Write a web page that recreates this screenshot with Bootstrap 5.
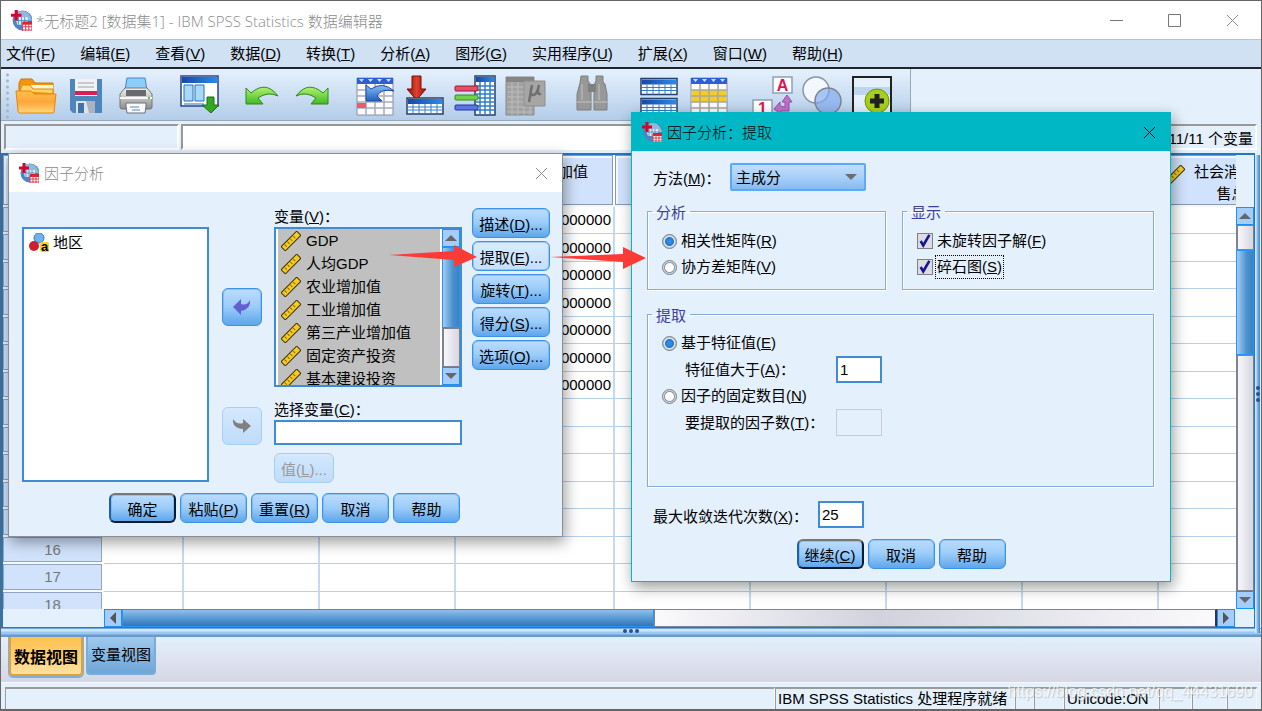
<!DOCTYPE html>
<html lang="zh-CN">
<head>
<meta charset="utf-8">
<meta name="viewport" content="width=device-width, initial-scale=1">
<title>IBM SPSS Statistics 数据编辑器</title>
<link href="https://cdn.jsdelivr.net/npm/bootstrap@5.3.0/dist/css/bootstrap.min.css" rel="stylesheet">
<style>
:root{--pane:#e4f0fc;--head:#d1e3fc;--blue:#2277c8;--line:#b5d0ea;--teal:#00b7c5}
body{font:15px/20px "Liberation Sans","Noto Sans CJK SC",sans-serif;color:#000;background:var(--pane);overflow:hidden}
button,input,select{font:inherit;color:inherit}
.app-window{height:100vh;border:1px solid #666;border-bottom-width:2px;background:var(--pane)}
.caption-text{font-family:"Noto Sans CJK SC",sans-serif;font-weight:300}
.win-title .caption-text{font-family:"Open Sans","Noto Sans CJK SC",sans-serif;padding-top:1px}
.win-title{height:38px;background:#fff;color:#8b8b8b;padding-left:10px}
.win-btn{width:58px;height:38px;border:0;background:none;padding:0}
.menu-strip{height:31px;gap:25px;padding:1px 0 0 5px;background:#cfe1f3;border-top:1px solid #b7c4d3;border-bottom:2px solid #20242c}
.menu-strip a{color:#000;text-decoration:none;white-space:nowrap}
.tool-strip{height:52px;background:linear-gradient(#e6f1fd,#b3cde9);border-bottom:1px solid #9aa7b6;border-right:1px solid #9aa7b6;width:910px;padding:2px 0 0 10px}
.grip-dots{width:3px;height:48px;margin-left:-5px;margin-right:2px;background:radial-gradient(circle,#a9b6c8 1px,#fff0 2px) 0 0/3px 6px}
.tool-group{margin-right:13px}
.tool-group.wide-gap{margin-right:17px}
.tool-btn{width:50px;height:48px;padding:0;border:0;background:none}
.tool-btn svg,.win-btn svg{display:block;margin:auto}
.cell-bar{height:32px;padding:3px 4px 3px 3px;gap:2px}
.cell-name{width:175px;border:2px solid #fff;border-top-color:#989898;border-left-color:#989898;background:var(--pane)}
.cell-edit{border:2px solid #fff;border-top-color:#989898;border-left-color:#989898;background:#fff;min-width:0}
.cell-info{width:105px;border-top:2px solid #989898;border-right:2px solid #fff;border-bottom:2px solid #fff;text-align:right;padding:3px 2px 0 0;white-space:nowrap}
.grid-frame{margin-right:6px;border:2px solid var(--blue);border-right-width:1px;border-bottom-width:1px;min-height:0}
.grid-view{min-width:0;overflow:hidden;background:#fff}
.data-grid{table-layout:fixed;width:1193px;border-collapse:separate;border-spacing:0}
.data-grid td{height:28px;padding:0 2px 0 0;text-align:right;border-right:2px solid #c5daf0;border-bottom:1px solid var(--line)}
.data-grid tbody tr:nth-child(odd)>*{height:27px}
.data-grid th{font-weight:400;background:var(--head);padding:0;border-right:2px solid #fff;border-bottom:2px solid #f4f8ff;box-shadow:inset 0 0 0 1px #94a5c0;text-align:center;color:#777}
.data-grid thead th{height:51px;color:#000;vertical-align:top;padding:6px 25px 0 0;line-height:22px;box-shadow:inset 0 0 0 1px #8999b4,inset 2px 2px 0 1px #f2f7ff}
.data-grid thead th.last-head{padding:6px 0 0 6px}
.c-num{width:101px}.c-first{width:80px}.c-std{width:136px}.c-wide{width:159px}
.v-scroll{width:19px}
.s-arrow{width:18px;height:18px;flex:none;padding:0;border:1px solid #1e90f5;background:#a5cdfc;display:flex;align-items:center;justify-content:center}
.v-thumb{background:linear-gradient(90deg,#a2cdf2,#4c92cf 60%,#3c80c2);border:1px solid #2a93f5}
.v-trough{background:linear-gradient(90deg,#f7f7fa,#d6d6e2);border:1px solid #7d8390;border-left-width:2px}
.h-scroll{height:18px;margin-left:101px;margin-right:19px}
.h-thumb{width:47%;background:linear-gradient(#8fc0ea,#5a9ad4 50%,#3375b5);border:1px solid #2a93f5}
.h-trough{background:linear-gradient(90deg,#fafafc,#d2d2de 40%,#fafafc);border:1px solid #7d8390;border-right:2px solid #334}
.split-line{height:9px;background:linear-gradient(#6ea8de 0 1px,#cfe6ff 1px 3px,#9cc7f2 4px 6px,#6a9aca 7px 9px)}
.side-split{position:absolute;right:1px;top:154px;bottom:76px;width:5px;background:linear-gradient(90deg,#d5e8fd 0 1px,#8fc0ef 2px,#3f86cc 5px)}
.view-tabs{height:46px;padding-left:8px;gap:3px;background:linear-gradient(#e4f0fd,#d6d6e4);align-items:start}
.view-tab{height:38px;padding:0;border:2px solid #7aabd9;border-top:0;border-radius:0 0 4px 4px;background:linear-gradient(#9fc9ee,#6fa6d8);width:70px;white-space:nowrap;display:flex;justify-content:center;align-items:center}
.view-tab.active{height:39px;width:74px;padding-top:6px;border-color:#dfa238;background:linear-gradient(#fdc04c,#ffe0a0);font-weight:700;font-size:16px;box-shadow:0 1px 0 1px #7fb0dc}
.status-strip{height:28px;padding:4px 4px 0 4px;border-top:1px solid #f4f9ff}
.status-cell{border-top:2px solid #9c9c9c;border-left:1px solid #9c9c9c;padding-left:2px;white-space:nowrap;border-right:1px solid #f3f8fd}
.watermark{position:absolute;right:9px;bottom:9px;font-size:16px;color:#ffffffc0;text-shadow:1px 1px 1px #8886}
.dlg{position:absolute;background:var(--pane);border:1px solid #8a8f96;box-shadow:2px 5px 14px #0006}
.dlg-factor{left:8px;top:153px;width:555px}
.dlg-extract{left:631px;top:112px;width:540px;border-color:var(--teal)}
.dlg-title{height:38px;background:#fff;color:#8b8b8b;padding-left:10px;gap:5px}
.dlg-extract .dlg-title{background:var(--teal);color:#000}
.dlg-title .win-btn{width:42px}
.blue-btn{height:30px;padding:4px 0 0;border:1px solid #3c92e6;border-radius:6px;box-shadow:inset 0 0 0 1px #5fa9ef80;background:linear-gradient(#bcdcfd,#9accf9 50%,#5fa5ec);line-height:20px;white-space:nowrap;text-align:center;color:#000}
.blue-btn.is-hover{background:linear-gradient(#d9ecff,#c4e0fc)}
.blue-btn.is-default{border:2px solid;border-color:#777 #0c1c30 #0c1c30 #23609f}
.blue-btn:disabled{border-color:#a5d0f6;box-shadow:none;background:linear-gradient(#d4e8fd,#bfdcf9);color:#999}
.btn-foot{width:67px}.btn-side{width:78px}.btn-value{width:60px}
.move-btn{width:40px;height:38px;padding:0}
.move-btn svg{display:block;margin:auto}
.source-col{width:187px;margin:35px 13px 0 13px}
.pick-list{background:#fff;border:2px solid #3f8bd6}
.source-list{height:255px;padding:4px 5px}
.move-col{width:40px;margin:96px 12px 0 0;gap:81px}
.target-col{width:188px;margin:15px 10px 0 0}
.var-list{height:160px;padding:0 0 0 2px}
.var-items{background:#c0c0c0;overflow:hidden;margin-right:2px}
.var-items li{height:23px;padding-left:3px;gap:5px}
.cmd-col{margin-top:16px;gap:3px}
.sel-label{padding-top:6px;margin-top:7px}
.text-in{border:2px solid #3f8bd6;background:#fff;padding:0 2px;border-radius:0;min-width:0}
.text-in:disabled{border:1px solid #c9cdd1;background:var(--pane)}
.text-in.full-in{height:25px;width:100%}
.text-in.num-in{width:46px;height:27px}
.dlg-foot{gap:4px}
.factor-foot{padding:10px 0 13px 100px}
.method-row{padding:12px 0 0 21px}
.method-row label{width:77px;padding-top:3px}
.method-select{width:136px;height:28px;padding:2px 0 0 4px;border:2px solid #5caaf5;border-radius:2px;appearance:none;background:url("data:image/svg+xml,%3Csvg xmlns='http://www.w3.org/2000/svg' width='14' height='8'%3E%3Cpath d='M1 1h12l-6 6z' fill='%236b6b70'/%3E%3C/svg%3E") right 6px center no-repeat,linear-gradient(#c3ddfb,#a9d0f9 50%,#84bbf0)}
.option-sets{padding:10px 16px 0 15px;gap:14px 16px}
.opt-box{border:1px solid #86add9;box-shadow:1px 1px 0 #fff,inset 1px 1px 0 #fff;min-width:0;padding:7px 0 9px 14px}
.opt-box legend{float:none;width:auto;font-size:15px;line-height:20px;color:#3c3f9c;margin:0 0 0 -10px;padding:2px 4px 0;height:20px}
.analysis-box{width:239px}
.opt-row{height:26px;gap:4px}
.opt-row input{appearance:none;margin:0;flex:none}
.opt-row input[type=radio]{width:15px;height:15px;border:1px solid #777f88;border-radius:50%;background:radial-gradient(circle,#fff 4px,#8b949e 5px,#d8dde3 6px)}
.opt-row input[type=radio]:checked{background:radial-gradient(circle,#2e8be6 2px,#2373c6 4px,#dfe9f2 5px,#c0c8d0 6px)}
.opt-row input[type=checkbox]{width:16px;height:16px;border:1px solid #808080;background:#dcdce6}
.opt-row input[type=checkbox]:checked{background:url("data:image/svg+xml,%3Csvg xmlns='http://www.w3.org/2000/svg' viewBox='0 0 16 16'%3E%3Cpath d='M3 8l3 5L13 1' fill='none' stroke='%23151590' stroke-width='3'/%3E%3C/svg%3E") center/contain,#dcdce6}
.focus-text{outline:1px dotted #000;outline-offset:1px}
.extract-box{padding:6px 0 50px 14px}
.sub-row{padding-left:23px;min-height:27px}
.sub-row label{width:151px;padding-top:1px}
.iter-row{padding:14px 0 11px 21px}
.iter-row label{width:165px;padding-top:4px}
.extract-foot{padding-bottom:12px}
.pointer-layer{position:absolute;left:389px;top:240px}
</style>
</head>
<body>
<svg width="0" height="0" class="position-absolute">
 <defs>
  <linearGradient id="gBlue" x2="0" y2="1"><stop stop-color="#8ac0f5"/><stop offset="1" stop-color="#1f5fc0"/></linearGradient>
  <linearGradient id="gHead"><stop stop-color="#1a47a8"/><stop offset="1" stop-color="#2c8ae8"/></linearGradient>
  <linearGradient id="gFold" x2="0" y2="1"><stop stop-color="#ffc04a"/><stop offset=".5" stop-color="#ffa53a"/><stop offset="1" stop-color="#ffd87a"/></linearGradient>
  <linearGradient id="gGreen" x2="0" y2="1"><stop stop-color="#b4f070"/><stop offset="1" stop-color="#3ebb22"/></linearGradient>
  <linearGradient id="gGray" x2="0" y2="1"><stop stop-color="#f2f2f2"/><stop offset="1" stop-color="#8c8c90"/></linearGradient>
  <linearGradient id="gRed"><stop stop-color="#7d120c"/><stop offset=".5" stop-color="#e2412c"/><stop offset="1" stop-color="#8d150c"/></linearGradient>
  <symbol id="logo" viewBox="0 0 20 20"><circle cx="11" cy="10" r="9.500" fill="#4d86bf"/><path d="M4 4a9 9 0 0 1 11 -2q4 3 5 8h-9z" fill="#8fb9dd"/><path d="M4 7h12v7H6z" fill="#e4eef8"/><path d="M4 10h12M7 7v7M10 7v7M13 7v7" stroke="#5b93c8"/><path d="M5 0v10M0 5h10" stroke="#d4062f" stroke-width="3"/><path d="M11 12h9v8h-9z" fill="#fff"/><path d="M11 11h9v3h-9z" fill="#cf2030"/><path d="M11 16h9M11 19h9M11 12v8M14 12v8M17 12v8M20 12v8" stroke="#e04050"/></symbol>
  <symbol id="ruler" viewBox="0 0 20 20"><g transform="rotate(-45 10 10)"><rect x="-1" y="7" width="22" height="6" fill="#f6cb20" stroke="#3b3208"/><path d="M3 8v3M7 8v3M11 8v3M15 8v3" stroke="#8a6a00"/></g></symbol>
  <symbol id="cross" viewBox="0 0 13 13"><path d="M1 1l11 11M12 1L1 12" stroke="currentColor" fill="none"/></symbol>
  <symbol id="up" viewBox="0 0 12 6"><path d="M0 6L6 0l6 6z" fill="#666"/></symbol>
  <symbol id="down" viewBox="0 0 12 6"><path d="M0 0l6 6 6-6z" fill="#666"/></symbol>
  <symbol id="sheet" viewBox="0 0 38 18"><rect x="1" y="1" width="36" height="16" fill="#fff" stroke="#23406f" stroke-width="1.5"/><rect x="2" y="2" width="34" height="5" fill="url(#gHead)"/><path d="M2 10h34M2 13h34M7 7v10M13 7v10M19 7v10M25 7v10M31 7v10" stroke="#2f7fd0"/></symbol>
 </defs>
</svg>

<div class="app-window d-flex flex-column position-relative">
 <header class="win-title d-flex align-items-center">
  <svg width="21" height="21"><use href="#logo"/></svg>
  <span class="caption-text ms-1 flex-grow-1">*无标题2 [数据集1] - IBM SPSS Statistics 数据编辑器</span>
  <button class="win-btn" aria-label="最小化"><svg width="13" height="13"><path d="M0 6.500h13" stroke="#777"/></svg></button>
  <button class="win-btn" aria-label="最大化"><svg width="13" height="13"><path d="M.5.5h12v12H.5z" fill="none" stroke="#777"/></svg></button>
  <button class="win-btn" aria-label="关闭"><svg width="13" height="13"><use href="#cross"/></svg></button>
 </header>
 <nav class="menu-strip d-flex align-items-center">
  <a href="#">文件(<u>F</u>)</a><a href="#">编辑(<u>E</u>)</a><a href="#">查看(<u>V</u>)</a><a href="#">数据(<u>D</u>)</a><a href="#">转换(<u>T</u>)</a><a href="#">分析(<u>A</u>)</a><a href="#">图形(<u>G</u>)</a><a href="#">实用程序(<u>U</u>)</a><a href="#">扩展(<u>X</u>)</a><a href="#">窗口(<u>W</u>)</a><a href="#">帮助(<u>H</u>)</a>
 </nav>
 <div class="tool-strip d-flex align-items-center" role="toolbar">
  <span class="grip-dots"></span>
  <div class="tool-group d-flex">
   <button class="tool-btn" aria-label="打开"><svg width="42" height="38" viewBox="0 0 42 38"><path d="M4 6l2-4h11l3 4h18v28H4z" fill="#f2960c" stroke="#c97708"/><path d="M6 8h32v5H6z" fill="#fff3d0"/><path d="M5 14L7 8h8l3 4h20v4" fill="#ffd569" stroke="#d8890f"/><path d="M1 14h15l3 3h22l-2 18q0 1-2 1H5q-2 0-2-2z" fill="url(#gFold)" stroke="#e88410"/></svg></button>
   <button class="tool-btn" aria-label="保存"><svg width="36" height="38" viewBox="0 0 36 38"><path d="M2 2h32v34H5l-3-3z" fill="#4f85bb"/><path d="M7 2h22v17H7z" fill="#f2f2f4"/><path d="M10 6h16M10 10h16" stroke="#b8bcc4" stroke-width="1.500"/><path d="M7 14h22v4H7z" fill="#dc1f50"/><path d="M8 24h19v12H8z" fill="#dfe3e8"/><path d="M10 26h6v10h-6z" fill="#3f74aa"/><path d="M18 24h9v12h-6z" fill="#aab4c0"/></svg></button>
   <button class="tool-btn" aria-label="打印"><svg width="36" height="40" viewBox="0 0 36 40"><path d="M9 2h18l2 12H7z" fill="#8ccdfa" stroke="#4388c4"/><path d="M7 12h22l5 6v13q0 2-2 2H4q-2 0-2-2V18z" fill="url(#gGray)" stroke="#777"/><path d="M8 14h20v6H8z" fill="#686a6e"/><path d="M2 22h32" stroke="#f8f8f8" stroke-width="2"/><path d="M8 27h20v3l-1 7H9l-1-7z" fill="#f8fafc" stroke="#6b7078"/><path d="M12 31h9M14 34h8" stroke="#6686b0"/><path d="M30 22h2" stroke="#4c4" stroke-width="2"/></svg></button>
  </div>
  <div class="tool-group"><button class="tool-btn" aria-label="重新调用对话框"><svg width="42" height="40" viewBox="0 0 42 40"><path d="M3 3h37v30H3z" fill="#fff" stroke="#24458c" stroke-width="1.500"/><path d="M4 4h35v6H4z" fill="url(#gHead)"/><path d="M6 12h9v16H6zM17 12h9v16h-9z" fill="#a9d9f8" stroke="#2870b8"/><path d="M6 31h20" stroke="#2870b8"/><path d="M29 24h7v8h5l-8 8-9-8h5z" fill="#34a822" stroke="#187010"/></svg></button></div>
  <div class="tool-group d-flex">
   <button class="tool-btn" aria-label="撤销"><svg width="36" height="24" viewBox="0 0 36 24"><path d="M2 4l5 5Q22-4 34 12 24 7 14 14l5 6H2z" fill="url(#gGreen)" stroke="#2d8a1a"/></svg></button>
   <button class="tool-btn" aria-label="重做"><svg width="36" height="24" viewBox="0 0 36 24"><path d="M34 4l-5 5Q14-4 2 12q10-5 20 2l-5 6h17z" fill="url(#gGreen)" stroke="#2d8a1a"/></svg></button>
  </div>
  <div class="tool-group wide-gap d-flex">
   <button class="tool-btn" aria-label="转到个案"><svg width="40" height="40" viewBox="0 0 40 40"><path d="M2 2h36v37H2z" fill="#fbfbfd" stroke="#8a90a0"/><path d="M2 2h36v6H2z" fill="#2c5fd4"/><path d="M4 3h5l-2.500 3zM13 3h5l-2.500 3zM22 3h5l-2.500 3zM31 3h5l-2.500 3z" fill="#cfe0ff"/><path d="M2 14h36M2 20h36M2 26h36M2 32h36M11 8v31M20 8v31M29 8v31" stroke="#a8abb8" stroke-width="1.500"/><path d="M2 27h9v5H2z" fill="#ef5a6a"/><path d="M11 9l5 4Q28 5 39 15q-13-3-17 5l5 5H11z" fill="url(#gBlue)" stroke="#1d4a9c"/></svg></button>
   <button class="tool-btn" aria-label="转到变量"><svg width="40" height="41" viewBox="0 0 40 41"><path d="M7 1h9v13h5L11.500 25 2 14h5z" fill="url(#gRed)" stroke="#74100a"/><use href="#sheet" x="1" y="22" width="38" height="18"/></svg></button>
   <button class="tool-btn" aria-label="变量"><svg width="42" height="41" viewBox="0 0 42 41"><path d="M21 1h20v39H21z" fill="#fff" stroke="#23406f" stroke-width="1.500"/><path d="M22 2h18v5H22z" fill="url(#gHead)"/><path d="M22 11h18M22 15h18M22 19h18M22 23h18M22 27h18M22 31h18M22 35h18M26 7v33M31 7v33M36 7v33" stroke="#2f7fd0" stroke-width="1.500"/><rect x="1" y="11" width="23" height="5" rx="1" fill="#e2506a" stroke="#a01838"/><rect x="1" y="20" width="23" height="5" rx="1" fill="#6fd04c" stroke="#378d1c"/><rect x="1" y="30" width="23" height="5" rx="1" fill="#5b78e0" stroke="#2038a0"/></svg></button>
   <button class="tool-btn" aria-label="运行描述统计" disabled><svg width="42" height="42" viewBox="0 0 42 42"><path d="M2 2h28v38H2z" fill="#a2a2a2" stroke="#8a8a8a"/><path d="M2 2h28v5H2z" fill="#858585"/><path d="M3 12h26M3 17h26M3 22h26M3 27h26M3 32h26M3 37h26M8 7v33M14 7v33M20 7v33M26 7v33" stroke="#bcbcbc"/><path d="M20 6h21v25H20z" fill="#a6a6a6" stroke="#8c8c8c"/><path d="M28 10l-3 17M28 11q-3 9 1 9 4 0 6-10-3 10 2 9" fill="none" stroke="#707070" stroke-width="2.500"/></svg></button>
  </div>
  <div class="tool-group wide-gap"><button class="tool-btn" aria-label="查找" disabled><svg width="32" height="36" viewBox="0 0 32 36"><path d="M5 1h7v5l3 4v25H1V19L4 8zM20 1h7v6l2 2 2 10v16H18V10l2-4z" fill="#989898" stroke="#7e7e7e"/><path d="M12 9h8v8h-8z" fill="#808080"/><path d="M1 27h14M18 27h13M6 9v16M23 9v16" stroke="#b4b4b4" stroke-width="1.500"/></svg></button></div>
  <div class="tool-group d-flex">
   <button class="tool-btn" aria-label="拆分文件"><svg width="40" height="40" viewBox="0 0 40 40"><use href="#sheet" x="1" y="1" width="38" height="19"/><use href="#sheet" x="1" y="21" width="38" height="19"/></svg></button>
   <button class="tool-btn" aria-label="选择个案"><svg width="38" height="40" viewBox="0 0 38 40"><path d="M1 2h36v38H1z" fill="#fbfbfd" stroke="#8a90a0"/><path d="M1 2h36v6H1z" fill="#2c5fd4"/><path d="M3 3h5L5.500 6zM12 3h5l-2.500 3zM21 3h5l-2.500 3zM30 3h5l-2.500 3z" fill="#cfe0ff"/><path d="M2 14h34v12H2z" fill="#f5cc20"/><path d="M1 14h36M1 20h36M1 26h36M1 32h36M10 8v32M19 8v32M28 8v32" stroke="#a8a8a0" stroke-width="1.500"/></svg></button>
  </div>
  <div class="d-flex">
   <button class="tool-btn" aria-label="值标签"><svg width="42" height="42" viewBox="0 0 42 42"><path d="M22 2h19v16H22zM2 25h19v16H2z" fill="#fff" stroke="#8fa0b8" stroke-width="1.500"/><text x="31.500" y="16" text-anchor="middle" font-size="16" font-weight="700" fill="#e0105a">A</text><text x="11.500" y="39" text-anchor="middle" font-size="16" font-weight="700" fill="#e0105a">1</text><path d="M36 20l-5 7h3v5q-4 0-5-2v-3l-6 7 7 5v-3h8V27h3z" fill="#c070c8" stroke="#9a4ca8"/></svg></button>
   <button class="tool-btn" aria-label="使用变量集"><svg width="42" height="42" viewBox="0 0 42 42"><circle cx="15" cy="15" r="13" fill="#f4f8fd" stroke="#8a93a0" stroke-width="1.500"/><circle cx="27" cy="26" r="13" fill="#7faaf0aa" stroke="#7c8694" stroke-width="1.500"/></svg></button>
   <button class="tool-btn" aria-label="定制工具栏"><svg width="42" height="42" viewBox="0 0 42 42"><path d="M2 2h38v39H2z" fill="#e4f0fc" stroke="#222" stroke-width="2"/><path d="M3 12h36v8H3z" fill="#bcd6f2"/><circle cx="26" cy="26" r="12" fill="#a8cf1c" stroke="#6f9210"/><path d="M26 19v14M19 26h14" stroke="#222" stroke-width="5"/></svg></button>
  </div>
 </div>
 <div class="cell-bar d-flex">
  <div class="cell-name"></div>
  <input class="cell-edit flex-grow-1" aria-label="单元格内容">
  <div class="cell-info">11/11 个变量</div>
 </div>

 <main class="grid-frame d-flex flex-column flex-grow-1">
  <div class="d-flex flex-grow-1 overflow-hidden">
   <div class="grid-view flex-grow-1">
    <table class="data-grid">
     <colgroup><col class="c-num"><col class="c-first"><col class="c-std"><col class="c-std"><col class="c-wide"><col class="c-std"><col class="c-std"><col class="c-std"><col class="c-std"><col class="c-std"></colgroup>
     <thead><tr><th></th><th></th><th></th><th></th><th class="text-end">加值</th><th></th><th></th><th></th><th></th>
      <th class="last-head"><span class="d-flex"><svg class="mt-1 flex-shrink-0" width="20" height="20"><use href="#ruler"/></svg><span class="flex-grow-1">社会消费品零<br>售总额</span></span></th></tr></thead>
     <tbody id="gridRows"></tbody>
    </table>
   </div>
   <div class="v-scroll d-flex flex-column pt-5">
    <button class="s-arrow mt-1" aria-label="上"><svg width="12" height="6"><use href="#up"/></svg></button>
    <div class="v-trough bg-white" style="height:6%"></div>
    <div class="v-thumb" style="height:26%"></div>
    <div class="v-trough flex-grow-1"></div>
    <button class="s-arrow" aria-label="下"><svg width="12" height="6"><use href="#down"/></svg></button>
   </div>
  </div>
  <div class="h-scroll d-flex">
   <button class="s-arrow" aria-label="左"><svg width="6" height="12"><path d="M6 0v12L0 6z" fill="#555"/></svg></button>
   <div class="h-thumb"></div><div class="h-trough flex-grow-1"></div>
   <button class="s-arrow" aria-label="右"><svg width="6" height="12"><path d="M0 0v12l6-6z" fill="#555"/></svg></button>
  </div>
 </main>
 <div class="side-split d-flex align-items-center"><svg width="5" height="18"><path d="M3 3h.01M3 9h.01M3 15h.01" stroke="#2a4f98" stroke-width="4" stroke-linecap="round"/></svg></div>
 <div class="split-line d-flex justify-content-center"><svg width="18" height="6"><path d="M3 3h.01M9 3h.01M15 3h.01" stroke="#2a4f98" stroke-width="4" stroke-linecap="round"/></svg></div>
 <div class="view-tabs d-flex">
  <button class="view-tab active">数据视图</button><button class="view-tab">变量视图</button>
 </div>
 <footer class="status-strip d-flex">
  <div class="status-cell flex-grow-1"></div>
  <div class="status-cell" style="width:240px">IBM SPSS Statistics 处理程序就绪</div>
  <div class="status-cell" style="width:19px"></div><div class="status-cell" style="width:30px"></div>
  <div class="status-cell" style="width:95px">Unicode:ON</div>
  <div class="status-cell" style="width:33px"></div><div class="status-cell" style="width:35px"></div><div class="status-cell" style="width:30px"></div>
 </footer>
</div>

<section class="dlg dlg-factor" role="dialog" aria-label="因子分析">
 <div class="dlg-title d-flex align-items-center">
  <svg width="20" height="20"><use href="#logo"/></svg><span class="caption-text flex-grow-1">因子分析</span>
  <button class="win-btn" aria-label="关闭"><svg width="13" height="13"><use href="#cross"/></svg></button>
 </div>
 <div class="d-flex align-items-start">
  <div class="source-col">
   <ul class="pick-list source-list list-unstyled mb-0">
    <li class="d-flex align-items-center"><svg width="20" height="20" viewBox="0 0 20 20"><circle cx="10" cy="5" r="5" fill="#6fb0ee" stroke="#3a7cc0"/><circle cx="5" cy="13" r="5" fill="#cc2030"/><rect x="11" y="9" width="9" height="10" rx="2" fill="#f3d02c"/><text x="15.500" y="18" text-anchor="middle" font-size="13" font-weight="700">a</text></svg><span class="ms-1">地区</span></li>
   </ul>
  </div>
  <div class="move-col d-flex flex-column">
   <button class="blue-btn move-btn" aria-label="移回"><svg width="20" height="18" viewBox="0 0 20 18"><path d="M1 9l8-8v5q6 2 9-4 1 9-9 11v4z" fill="#6460d0"/></svg></button>
   <button class="blue-btn move-btn" aria-label="移入" disabled><svg width="20" height="18" viewBox="0 0 20 18"><path d="M19 9l-8-7v4Q5 8 1 2q-1 9 10 10v4z" fill="#808080"/></svg></button>
  </div>
  <div class="target-col">
   <div>变量(<u>V</u>)：</div>
   <div class="pick-list var-list d-flex">
    <ul class="var-items list-unstyled mb-0 flex-grow-1" id="varItems"></ul>
    <div class="d-flex flex-column">
     <button class="s-arrow" aria-label="上"><svg width="12" height="6"><use href="#up"/></svg></button>
     <div class="v-thumb flex-grow-1"></div><div class="v-trough" style="height:25%"></div>
     <button class="s-arrow" aria-label="下"><svg width="12" height="6"><use href="#down"/></svg></button>
    </div>
   </div>
   <label class="d-block sel-label" for="selVar">选择变量(<u>C</u>)：</label>
   <input id="selVar" class="text-in full-in d-block">
   <button class="blue-btn btn-value mt-2" disabled>值(<u>L</u>)...</button>
  </div>
  <div class="cmd-col d-flex flex-column">
   <button class="blue-btn btn-side">描述(<u>D</u>)...</button>
   <button class="blue-btn btn-side is-hover">提取(<u>E</u>)...</button>
   <button class="blue-btn btn-side">旋转(<u>T</u>)...</button>
   <button class="blue-btn btn-side">得分(<u>S</u>)...</button>
   <button class="blue-btn btn-side">选项(<u>O</u>)...</button>
  </div>
 </div>
 <div class="dlg-foot factor-foot d-flex">
  <button class="blue-btn btn-foot is-default">确定</button><button class="blue-btn btn-foot">粘贴(<u>P</u>)</button><button class="blue-btn btn-foot">重置(<u>R</u>)</button><button class="blue-btn btn-foot">取消</button><button class="blue-btn btn-foot">帮助</button>
 </div>
</section>

<section class="dlg dlg-extract" role="dialog" aria-label="因子分析：提取">
 <div class="dlg-title d-flex align-items-center">
  <svg width="20" height="20"><use href="#logo"/></svg><span class="caption-text flex-grow-1">因子分析：提取</span>
  <button class="win-btn" aria-label="关闭"><svg width="13" height="13"><use href="#cross"/></svg></button>
 </div>
 <div class="method-row d-flex align-items-center">
  <label for="method">方法(<u>M</u>)：</label>
  <select id="method" class="method-select"><option>主成分</option></select>
 </div>
 <div class="option-sets d-flex flex-wrap">
  <fieldset class="opt-box analysis-box"><legend>分析</legend>
   <label class="opt-row d-flex align-items-center"><input type="radio" name="mat" checked><span>相关性矩阵(<u>R</u>)</span></label>
   <label class="opt-row d-flex align-items-center"><input type="radio" name="mat"><span>协方差矩阵(<u>V</u>)</span></label>
  </fieldset>
  <fieldset class="opt-box flex-grow-1"><legend>显示</legend>
   <label class="opt-row d-flex align-items-center"><input type="checkbox" checked><span>未旋转因子解(<u>F</u>)</span></label>
   <label class="opt-row d-flex align-items-center"><input type="checkbox" checked><span class="focus-text">碎石图(<u>S</u>)</span></label>
  </fieldset>
  <fieldset class="opt-box extract-box w-100"><legend>提取</legend>
   <label class="opt-row d-flex align-items-center"><input type="radio" name="ext" checked><span>基于特征值(<u>E</u>)</span></label>
   <div class="sub-row d-flex align-items-center"><label for="eigen">特征值大于(<u>A</u>)：</label><input id="eigen" class="text-in num-in" value="1"></div>
   <label class="opt-row d-flex align-items-center"><input type="radio" name="ext"><span>因子的固定数目(<u>N</u>)</span></label>
   <div class="sub-row d-flex align-items-center"><label for="nfac">要提取的因子数(<u>T</u>)：</label><input id="nfac" class="text-in num-in" disabled></div>
  </fieldset>
 </div>
 <div class="iter-row d-flex align-items-center"><label for="iter">最大收敛迭代次数(<u>X</u>)：</label><input id="iter" class="text-in num-in" value="25"></div>
 <div class="dlg-foot extract-foot d-flex justify-content-center">
  <button class="blue-btn btn-foot is-default">继续(<u>C</u>)</button><button class="blue-btn btn-foot">取消</button><button class="blue-btn btn-foot">帮助</button>
 </div>
</section>

<svg class="pointer-layer" width="260" height="34" aria-hidden="true"><path d="M0 15l65-4V5l23 12-23 10v-7zM161 17l73-3V7l23 11-23 11v-7z" fill="#fc3b37"/></svg>
<div class="watermark">https://blog.csdn.net/qq_44431690</div>

<script>
const rows = document.getElementById('gridRows');
for (let n = 4; n <= 18; n++) {
  const cells = Array.from({length: 9}, (_, c) => `<td>${c === 3 && n <= 10 ? '000000' : ''}</td>`).join('');
  rows.insertAdjacentHTML('beforeend', `<tr><th>${n >= 16 ? n : ''}</th>${cells}</tr>`);
}
for (const name of ['GDP', '人均GDP', '农业增加值', '工业增加值', '第三产业增加值', '固定资产投资', '基本建设投资'])
  document.getElementById('varItems').insertAdjacentHTML('beforeend',
    `<li class="d-flex align-items-center"><svg width="20" height="20"><use href="#ruler"/></svg><span>${name}</span></li>`);
</script>
<script src="https://cdn.jsdelivr.net/npm/bootstrap@5.3.0/dist/js/bootstrap.bundle.min.js"></script>
</body>
</html>
